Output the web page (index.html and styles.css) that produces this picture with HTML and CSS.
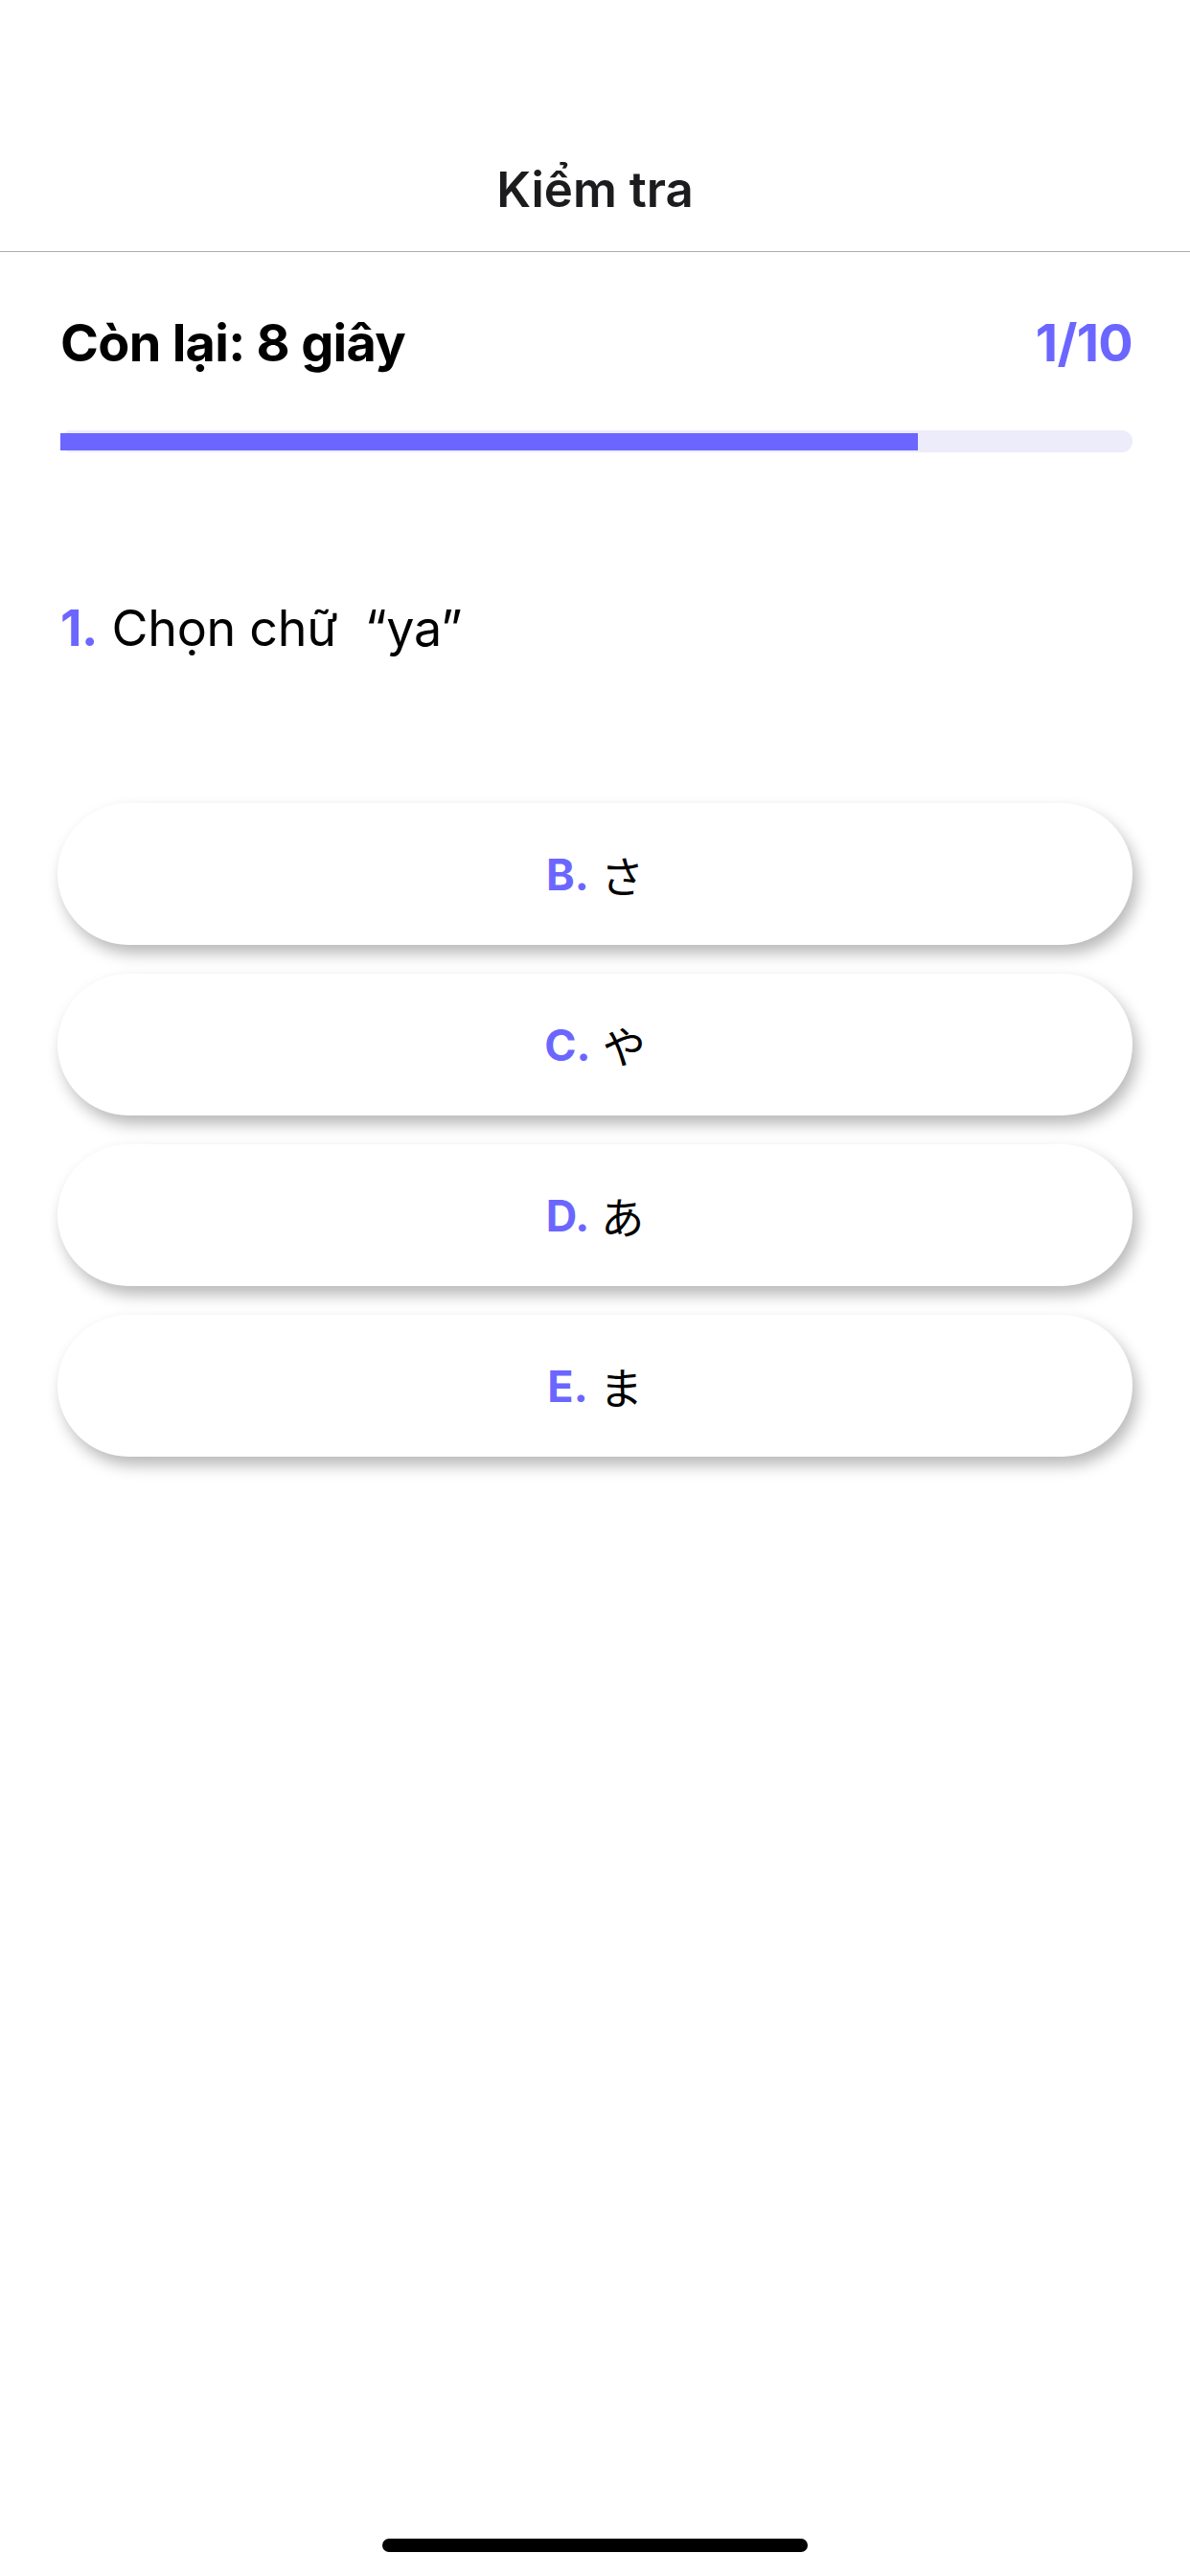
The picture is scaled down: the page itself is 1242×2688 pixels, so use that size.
FILE: index.html
```html
<!DOCTYPE html>
<html lang="vi">
<head>
    <meta charset="UTF-8">
    <meta name="viewport" content="width=device-width, initial-scale=1.0">
    <title>Kiểm tra</title>
    <link rel="stylesheet" href="styles.css">
</head>
<body>
    <header class="nav">
        <h1>Kiểm tra</h1>
    </header>
    <main>
        <!-- Timer and question counter -->
        <div class="status">
            <span class="timer">Còn lại: 8 giây</span>
            <span class="count">1/10</span>
        </div>
        <div class="progress">
            <div class="progress-fill" style="width: 80%"></div>
        </div>

        <p class="question"><b>1.</b> Chọn chữ &nbsp;“ya”</p>

        <!-- Answer options -->
        <div class="options">
            <button class="option"><b>B.</b> <span class="kana">さ</span></button>
            <button class="option"><b>C.</b> <span class="kana">や</span></button>
            <button class="option"><b>D.</b> <span class="kana">あ</span></button>
            <button class="option"><b>E.</b> <span class="kana">ま</span></button>
        </div>
    </main>

    <div class="home-indicator"></div>
</body>
</html>
```

FILE: styles.css
```css
body {
    font-family: Inter, "Noto Sans CJK JP", sans-serif;
    background-color: #fff;
    margin: 0;
    padding: 0;
    color: #000;
    width: 1242px;
    height: 2688px;
    position: relative;
    overflow: hidden;
}
.nav {
    height: 130px;
    padding-top: 132px;
    display: flex;
    align-items: center;
    justify-content: center;
    border-bottom: 1px solid #adadad;
}
.nav h1 {
    margin: 0;
    font-size: 51px;
    font-weight: 600;
    color: #1c1c1e;
}
main {
    padding: 0 60px;
}
.status {
    margin-top: 63px;
    padding-left: 3px;
    display: flex;
    justify-content: space-between;
    align-items: center;
    font-size: 54px;
    line-height: 64px;
    font-weight: 700;
    letter-spacing: -0.7px;
}
.count {
    color: #6b66ff;
}
.progress {
    margin: 59px 0 0 3px;
    height: 23px;
    border-radius: 12px;
    background-color: #edecfb;
    padding: 3px 0 2px 0;
    box-sizing: border-box;
}
.progress-fill {
    height: 100%;
    background-color: #6b66ff;
}
.question {
    margin: 152px 0 0 0;
    padding-left: 3px;
    font-size: 52px;
    line-height: 64px;
    letter-spacing: -0.3px;
}
.question b {
    color: #6b66ff;
}
.options {
    margin-top: 150px;
    display: flex;
    flex-direction: column;
    gap: 30px;
}
.option {
    height: 148px;
    border: none;
    border-radius: 74px;
    background-color: #fff;
    box-shadow: 5px 9px 16px rgba(0, 0, 0, 0.28);
    font-family: Inter, "Noto Sans CJK JP", sans-serif;
    font-size: 45px;
    color: #000;
    display: flex;
    align-items: center;
    justify-content: center;
}
.option b {
    color: #6b66ff;
    margin-right: 12px;
}
.kana {
    font-family: "Noto Sans CJK JP", sans-serif;
    font-weight: 400;
}
.home-indicator {
    position: absolute;
    left: 399px;
    bottom: 25px;
    width: 444px;
    height: 14px;
    border-radius: 7px;
    background-color: #000;
}
```
